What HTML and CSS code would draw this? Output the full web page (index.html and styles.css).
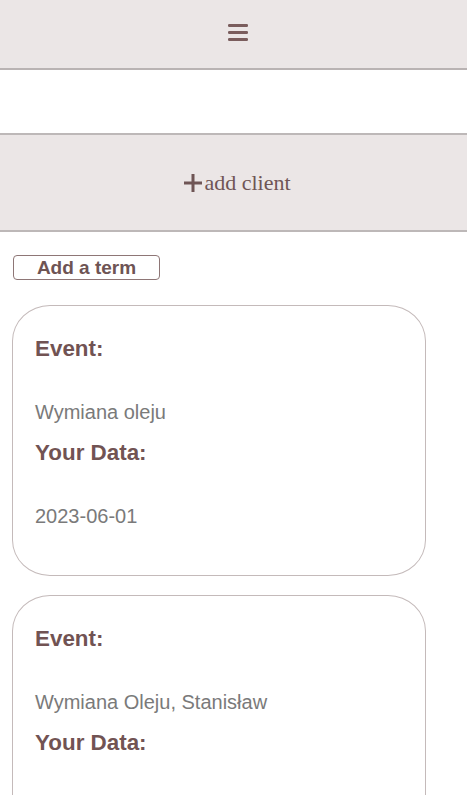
FILE: index.html
```html
<!DOCTYPE html>
<html lang="en">
<head>
<meta charset="utf-8">
<title>Terms</title>
<link rel="stylesheet" href="styles.css">
</head>
<body>
<header class="topbar">
  <button class="menu-btn" aria-label="menu">
    <svg width="20" height="17" viewBox="0 0 20 17"><rect x="0" y="0" width="20" height="3" rx="1.2" fill="#7a5d5d"/><rect x="0" y="7" width="20" height="3" rx="1.2" fill="#7a5d5d"/><rect x="0" y="14" width="20" height="3" rx="1.2" fill="#7a5d5d"/></svg>
  </button>
</header>
<div class="blank"></div>
<div class="addbar">
  <span class="add-client"><svg class="plus" width="18" height="18" viewBox="0 0 18 18"><rect x="0" y="7.5" width="18" height="3" fill="#6f5555"/><rect x="7.5" y="0" width="3" height="18" fill="#6f5555"/></svg>add client</span>
</div>
<main class="content">
  <button class="term-btn">Add a term</button>
  <section class="card">
    <h3 class="label">Event:</h3>
    <p class="value">Wymiana oleju</p>
    <h3 class="label">Your Data:</h3>
    <p class="value last">2023-06-01</p>
  </section>
  <section class="card">
    <h3 class="label">Event:</h3>
    <p class="value">Wymiana Oleju, Stanisław</p>
    <h3 class="label">Your Data:</h3>
    <p class="value last">2023-06-02</p>
  </section>
</main>
</body>
</html>
```
FILE: styles.css
```css
html, body {
  margin: 0;
  padding: 0;
  background: #ffffff;
  font-family: "Liberation Sans", Arial, sans-serif;
}

.topbar {
  height: 68px;
  background: #ebe6e6;
  border-bottom: 2px solid #b9b3b3;
  display: flex;
  align-items: center;
  justify-content: center;
  padding-left: 8px;
  box-sizing: content-box;
}

.menu-btn {
  background: none;
  border: none;
  padding: 0;
  margin: 0 0 3px 0;
  display: flex;
  cursor: pointer;
}

.blank {
  height: 63px;
}

.addbar {
  height: 95px;
  background: #ebe6e6;
  border-top: 2px solid #bdb8b8;
  border-bottom: 2px solid #bdb8b8;
  display: flex;
  align-items: center;
  justify-content: center;
  padding-left: 8px;
}

.add-client {
  display: flex;
  align-items: center;
  gap: 2px;
  font-family: "Liberation Serif", "Times New Roman", serif;
  font-size: 22px;
  color: #6f5555;
}

.plus {
  display: block;
  margin-top: 1px;
}

.content {
  padding: 23px 12px 0 12px;
}

.term-btn {
  display: block;
  width: 147px;
  height: 25px;
  margin: 0 0 25px 1px;
  padding: 0;
  background: #ffffff;
  border: 1px solid #8e7676;
  border-radius: 4px;
  font-family: "Liberation Sans", Arial, sans-serif;
  font-weight: bold;
  font-size: 19px;
  line-height: 22px;
  color: #6e5454;
}

.card {
  width: 414px;
  box-sizing: border-box;
  border: 1px solid #c4baba;
  border-radius: 38px / 36px;
  padding: 14px 22px 12px 22px;
  margin-bottom: 19px;
}

.label {
  margin: 16px 0 0 0;
  font-size: 22.4px;
  font-weight: bold;
  color: #715353;
}

.value {
  margin: 39px 0 0 0;
  font-size: 20px;
  color: #7a7a7a;
}

.value.last {
  margin-bottom: 35px;
}
```
